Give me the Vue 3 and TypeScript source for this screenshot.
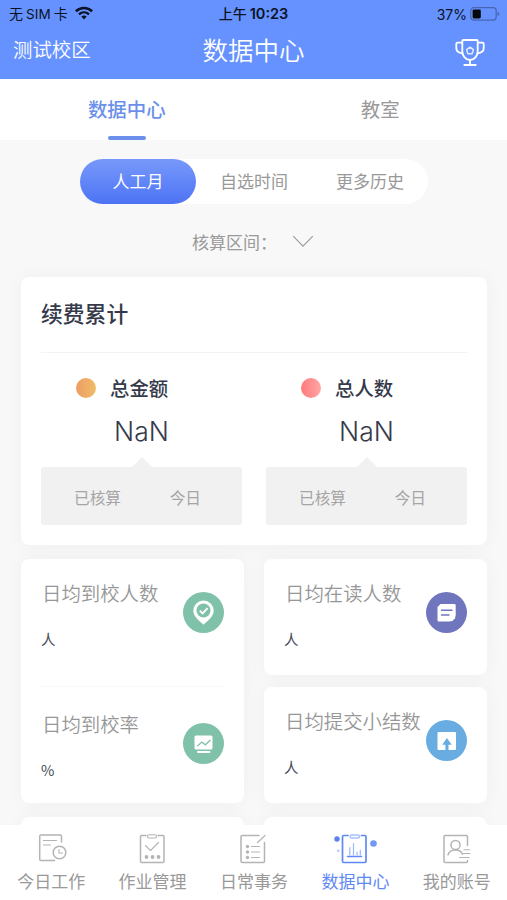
<script setup lang="ts">
import { ref } from 'vue'

interface Metric {
  title: string
  unit: string
  icon: 'pin' | 'chart' | 'note' | 'upload'
  tone: string
}

const ranges: string[] = ['人工月', '自选时间', '更多历史']
const activeRange = ref(0)
const views: string[] = ['数据中心', '教室']
const activeView = ref(0)

const totals = [
  { label: '总金额', value: 'NaN', tone: 'amber' },
  { label: '总人数', value: 'NaN', tone: 'coral' },
]

const columns: Metric[][][] = [
  [
    [
      { title: '日均到校人数', unit: '人', icon: 'pin', tone: 'green' },
      { title: '日均到校率', unit: '%', icon: 'chart', tone: 'green' },
    ],
  ],
  [
    [{ title: '日均在读人数', unit: '人', icon: 'note', tone: 'purple' }],
    [{ title: '日均提交小结数', unit: '人', icon: 'upload', tone: 'blue' }],
  ],
]

const navItems = ['今日工作', '作业管理', '日常事务', '数据中心', '我的账号']
const activeNav = ref(3)
</script>

<template>
  <div class="screen">
    <header class="header">
      <div class="status">
        <div class="status-left">
          <span>无<i class="sim">SIM</i>卡</span>
          <svg class="wifi" width="18" height="14" viewBox="0 0 18 14" fill="none" stroke="#0b1226">
            <path d="M.9 5.2C5.5.9 12.5.9 17.1 5.2" stroke-width="2.6" />
            <path d="M4 8.3c2.9-2.6 7.1-2.6 10 0" stroke-width="2.4" />
            <path d="M6.3 10.4c1.6-1.3 3.8-1.3 5.4 0L9 13.4z" fill="#0b1226" stroke="none" />
          </svg>
        </div>
        <div class="clock">上午<b>10:23</b></div>
        <div class="status-right">
          <span>37%</span>
          <svg width="30" height="14" viewBox="0 0 30 14">
            <rect x=".8" y=".7" width="25.4" height="12.4" rx="3" fill="none" stroke="#4866b0" stroke-width="1.2" />
            <rect x="2.6" y="2.4" width="8.2" height="9" rx="1.4" fill="#05070d" />
            <path d="M27.6 4.7c2.2.7 2.2 3.7 0 4.4z" fill="#4866b0" />
          </svg>
        </div>
      </div>
      <div class="titlebar">
        <span class="campus">测试校区</span>
        <h1>数据中心</h1>
        <svg class="trophy" width="30" height="28" viewBox="0 0 30 28" fill="none" stroke="#fff" stroke-width="1.8" stroke-linejoin="round" stroke-linecap="round">
          <path d="M7.3 2c0-.6.4-1 1-1h13.4c.6 0 1 .4 1 1v10.400c0 4.600-3.400 8.600-7.700 8.600s-7.700-4-7.700-8.600z" />
          <path d="M7.200 3.700H2.500c-.7 0-1.200.5-1.200 1.200v4.300c0 3 2.600 4.700 6.300 5.200M22.800 3.700h4.700c.7 0 1.200.5 1.200 1.200v4.300c0 3-2.600 4.700-6.300 5.200M15 21v4.500M9.300 26h11.400" />
          <path d="m15 8.200 3.400 2.500-1.300 4h-4.200l-1.300-4z" stroke="#dfe8ff" stroke-width="1.500" />
        </svg>
      </div>
    </header>

    <nav class="tabs">
      <button v-for="(view, i) in views" :key="view" class="tab" :class="{ active: activeView === i }" @click="activeView = i">
        {{ view }}
      </button>
    </nav>

    <main class="content">
      <div class="segments">
        <button v-for="(range, i) in ranges" :key="range" class="segment" :class="{ active: activeRange === i }" @click="activeRange = i">
          {{ range }}
        </button>
      </div>

      <div class="period">
        <span>核算区间：</span>
        <svg width="22" height="13" viewBox="0 0 22 13" fill="none" stroke="#999" stroke-width="1.1">
          <path d="m1.200 1.200 9.800 10 9.800-10" />
        </svg>
      </div>

      <section class="card summary">
        <h2>续费累计</h2>
        <div class="totals">
          <div v-for="total in totals" :key="total.label" class="total">
            <div class="total-label"><i class="dot" :class="total.tone"></i><span>{{ total.label }}</span></div>
            <div class="total-value">{{ total.value }}</div>
            <div class="breakdown"><span>已核算</span><span>今日</span></div>
          </div>
        </div>
      </section>

      <div class="metrics">
        <div v-for="(column, c) in columns" :key="c" class="column">
          <section v-for="(group, g) in column" :key="g" class="card metric-card">
            <article v-for="metric in group" :key="metric.title" class="metric">
              <div class="metric-text">
                <h3>{{ metric.title }}</h3>
                <span class="unit">{{ metric.unit }}</span>
              </div>
              <div class="badge" :class="metric.tone">
                <svg v-if="metric.icon === 'pin'" width="41" height="41" viewBox="0 0 41 41">
                  <path d="M20.500 8.500a10.200 10.200 0 0 0-10.200 10.200c0 5.800 6.200 10.300 10.200 14 4-3.700 10.200-8.200 10.200-14A10.200 10.200 0 0 0 20.500 8.500z" fill="#fff" />
                  <circle cx="20.500" cy="18.500" r="7" fill="#80c1a9" />
                  <path d="m16.800 18.600 2.800 2.800 5-5.300" fill="none" stroke="#fff" stroke-width="1.900" />
                </svg>
                <svg v-else-if="metric.icon === 'chart'" width="41" height="41" viewBox="0 0 41 41">
                  <rect x="11.500" y="12.500" width="18" height="14" rx="1.500" fill="#fff" />
                  <path d="m14.500 23 4.300-4 3.600 2.800 5-4.800" fill="none" stroke="#80c1a9" stroke-width="1.300" />
                  <path d="M15 29h11.500" stroke="#fff" stroke-width="2" stroke-linecap="round" />
                </svg>
                <svg v-else-if="metric.icon === 'note'" width="41" height="41" viewBox="0 0 41 41">
                  <path d="M14.500 12h13.700c1 0 1.500.5 1.500 1.500V23l-.7 3.200-2.600 2.800-3.400.6H13c-1 0-1.500-.5-1.500-1.500V15z" fill="#fff" />
                  <path d="M15.500 18.200H26M15.500 23h7.500" stroke="#7076bd" stroke-width="1.500" stroke-linecap="round" />
                </svg>
                <svg v-else width="41" height="41" viewBox="0 0 41 41">
                  <rect x="11.500" y="12" width="18.500" height="18" rx="1" fill="#fff" />
                  <path d="m20.900 18 4.800 6.800h-3.200V30h-3.100v-5.200h-3.200z" fill="#69ace1" />
                </svg>
              </div>
            </article>
          </section>
          <section class="card metric-card upcoming"></section>
        </div>
      </div>
    </main>

    <footer class="navbar">
      <button v-for="(item, i) in navItems" :key="item" class="nav-item" :class="{ active: activeNav === i }" @click="activeNav = i">
        <svg width="46" height="34" viewBox="0 0 46 34" fill="none" stroke="currentColor" stroke-width="1.500" stroke-linecap="round" stroke-linejoin="round">
          <template v-if="i === 0">
            <path d="M33.500 11V5.200c0-.8-.5-1.300-1.300-1.300H13c-.8 0-1.300.5-1.300 1.300v23c0 .8.500 1.300 1.300 1.300H26.500" />
            <path d="M15.500 9.500H28.500M15.500 14h7" stroke-width="1.100" />
            <circle cx="31.500" cy="21.500" r="6.300" />
            <path d="M31 18.500v3.500h3.500" stroke-width="1.100" />
          </template>
          <template v-else-if="i === 1">
            <path d="M17 4.500h-4.300c-.8 0-1.200.4-1.200 1.200v24.600c0 .8.400 1.200 1.200 1.200h21.100c.8 0 1.200-.4 1.200-1.200V5.700c0-.8-.4-1.200-1.200-1.200H29" />
            <rect x="18.500" y="3.800" width="9" height="3.200" rx="1.500" stroke-width="1.100" />
            <path d="m16.500 14.500 5 5 8-8" stroke-width="1.100" />
            <g fill="currentColor" stroke="none"><circle cx="17.500" cy="26" r="1.900" /><circle cx="23.500" cy="26" r="1.900" /><circle cx="29.500" cy="26" r="1.900" /></g>
          </template>
          <template v-else-if="i === 2">
            <path d="M29 4.500H12.200c-.8 0-1.200.4-1.200 1.200v24.600c0 .8.400 1.200 1.200 1.200h21.100c.8 0 1.200-.4 1.200-1.200V11.500" />
            <path d="M35 4.500l-7.500 7M21.500 15.500h8M21.500 21h8M21.500 26.500h8" stroke-width="1.200" />
            <g fill="currentColor" stroke="none"><circle cx="17.500" cy="15.500" r="1.700" /><circle cx="17.500" cy="21" r="1.700" /><circle cx="17.500" cy="26.500" r="1.700" /></g>
          </template>
          <template v-else-if="i === 3">
            <path d="M16 4.500h-4.300c-.8 0-1.200.4-1.200 1.200v24.600c0 .8.400 1.200 1.200 1.200h21.100c.8 0 1.200-.4 1.200-1.200V5.700c0-.8-.4-1.200-1.200-1.200H29.500" stroke-width="1.700" />
            <rect x="18" y="4" width="9.500" height="3" rx="1.500" stroke="#a9c1fc" />
            <path d="M15.500 25.500h14" />
            <path d="M17.800 24v-7.500M21.500 24V12.500M25 24v-3M28.300 24v-5" stroke="#9bb6fa" stroke-width="1.200" />
            <g stroke="none"><circle cx="5" cy="8" r="2.700" fill="#5b83ef" /><circle cx="41.500" cy="12.500" r="3.300" fill="#7399f7" /><circle cx="6.200" cy="19.800" r="1.300" fill="#b5c9fb" /></g>
          </template>
          <template v-else>
            <path d="M34.500 14.500V5.700c0-.8-.4-1.200-1.200-1.200H12.200c-.8 0-1.200.4-1.200 1.200v24.600c0 .8.400 1.200 1.200 1.200h21.100c.8 0 1.200-.4 1.200-1.200v-.8" />
            <path d="M31 18.700h5.500M30.500 22.500H37M26.500 26.500H36" stroke-width="1.100" />
            <circle cx="22.500" cy="14" r="4.600" />
            <path d="M15 23.800c2-6.300 12.500-6.300 14.500-.5" />
          </template>
        </svg>
        <span>{{ item }}</span>
      </button>
    </footer>
  </div>
</template>

<style>
body {
  margin: 0;
  background: #f8f8f8;
}
</style>

<style scoped>
.screen {
  width: 507px;
  height: 900px;
  display: flex;
  flex-direction: column;
  overflow: hidden;
  box-sizing: border-box;
  font-family: Inter, "Noto Sans CJK SC", sans-serif;
  background: #f8f8f8;
  color: #999;
}
button {
  border: 0;
  padding: 0;
  background: none;
  font: inherit;
  color: inherit;
}
h1, h2, h3 { margin: 0; }
i { font-style: normal; }

.header {
  height: 79px;
  flex: none;
  background: #6692ff;
}
.status {
  height: 27px;
  display: grid;
  grid-template-columns: 1fr auto 1fr;
  align-items: center;
  padding: 0 7px 0 9px;
  color: #0b1226;
  font-size: 14px;
  line-height: 27px;
}
.status-left { display: flex; align-items: center; gap: 7px; }
.sim { margin: 0 3px; font-size: 13.5px; letter-spacing: .1px; }
.wifi { margin-top: -2px; }
.clock { font-size: 14px; line-height: 25px; font-weight: 500; margin: -1px 2px 0 0; }
.clock b { font-weight: 600; margin-left: 3px; font-size: 14.5px; }
.status-right { display: flex; align-items: center; justify-content: flex-end; gap: 3px; }

.titlebar {
  height: 48px;
  display: grid;
  grid-template-columns: 1fr auto 1fr;
  align-items: center;
  padding: 0 22px 0 13px;
  color: #fff;
}
.campus { font-size: 19.400px; line-height: 46px; height: 48px; font-weight: 350; }
h1 { font-size: 25.500px; font-weight: 350; line-height: 48px; height: 48px; margin: 0 0 0 9px; }
.trophy { justify-self: end; margin-top: 3px; }

.tabs {
  height: 61px;
  flex: none;
  display: grid;
  grid-template-columns: 1fr 1fr;
  background: #fff;
}
.tab {
  display: flex;
  flex-direction: column;
  align-items: center;
  justify-content: flex-start;
  font-size: 19.400px;
  line-height: 62px;
  height: 61px;
}
.tab.active { color: #6b8fea; font-weight: 500; }
.tab.active::after {
  content: "";
  width: 38px;
  height: 4px;
  margin-top: -5px;
  flex: none;
  border-radius: 2px;
  background: #6b8fea;
}

.content {
  flex: 1;
  min-height: 0;
  overflow: hidden;
  padding: 19px 20px 0 21px;
}
.segments {
  width: 348px;
  height: 45px;
  margin: 0 auto;
  display: grid;
  grid-template-columns: repeat(3, 1fr);
  border-radius: 23px;
  background: #fff;
}
.segment { font-size: 17px; line-height: 46px; height: 45px; border-radius: 23px; }
.segment.active { color: #fff; background: linear-gradient(#7799fb, #4d73f4); }

.period {
  height: 73px;
  display: flex;
  align-items: center;
  justify-content: center;
  gap: 15px;
  font-size: 17px;
  box-sizing: border-box;
  padding: 2px 2px 0 0;
}
.period svg { margin-top: -1px; }

.card {
  background: #fff;
  border-radius: 8px;
  box-shadow: 0 0 20px rgba(0, 0, 0, .04);
  box-sizing: border-box;
}
.summary { height: 268px; padding: 0 20px; color: #353a4b; }
h2 {
  height: 76px;
  box-sizing: border-box;
  font-size: 21.800px;
  font-weight: 500;
  line-height: 74px;
  border-bottom: 1px solid #f3f3f3;
}
.totals { display: grid; grid-template-columns: 201px 201px; justify-content: space-between; }
.total-label {
  height: 56px;
  margin-top: 7px;
  padding-left: 35px;
  display: flex;
  align-items: center;
  gap: 14px;
  font-size: 19.400px;
  line-height: 28px;
  font-weight: 500;
}
.total-label span { padding-top: 2px; }
.dot { width: 20px; height: 20px; border-radius: 50%; }
.amber { background: linear-gradient(90deg, #ee9c63, #efbd6a); }
.coral { background: linear-gradient(90deg, #ff7a7c, #ffa6a5); }
.total-value {
  height: 51px;
  line-height: 30px;
  font-size: 26.500px;
  font-weight: 350;
  text-align: center;
}
.breakdown {
  position: relative;
  height: 58px;
  box-sizing: border-box;
  padding: 6px 41px 0 33px;
  display: flex;
  align-items: center;
  justify-content: space-between;
  font-size: 15.700px;
  line-height: 24px;
  color: #a5a5a5;
  background: #f1f1f1;
  border-radius: 3px;
}
.breakdown::before {
  content: "";
  position: absolute;
  top: -10px;
  left: 50%;
  margin-left: -10px;
  border: solid transparent;
  border-width: 0 10px 10px;
  border-bottom-color: #f1f1f1;
}

.metrics { margin-top: 14px; display: grid; grid-template-columns: 223px 223px; justify-content: space-between; }
.column { display: flex; flex-direction: column; gap: 12px; }
.metric-card { padding: 0 20px; }
.metric { height: 116px; display: flex; justify-content: space-between; position: relative; }
.metric + .metric { margin-top: 11px; border-top: 1px solid #f8f8f8; }
.metric-text { padding-top: 21px; white-space: nowrap; }
.metric + .metric .metric-text { padding-top: 24px; }
h3 { margin-left: 1px; font-size: 19.400px; line-height: 28px; font-weight: 350; color: #979797; }
.unit { display: block; margin-top: 18px; font-family: "Noto Sans CJK SC", sans-serif; font-size: 14.500px; line-height: 26px; font-weight: 400; color: #454a55; }
.badge {
  position: absolute;
  top: 33px;
  right: 0;
  width: 41px;
  height: 41px;
  border-radius: 50%;
}
.metric + .metric .badge { top: 36px; }
.green { background: #80c1a9; }
.purple { background: #7076bd; }
.blue { background: #69ace1; }
.upcoming { height: 100px; margin-top: 2px; }

.navbar {
  height: 75px;
  flex: none;
  display: grid;
  grid-template-columns: repeat(5, 1fr);
  background: #fff;
  z-index: 1;
}
.nav-item { display: flex; flex-direction: column; align-items: center; font-size: 17px; color: #999; }
.nav-item svg { margin-top: 6px; flex: none; color: #b4b4b4; }
.nav-item span { line-height: 26px; margin-top: 4px; padding-left: 1px; }
.nav-item.active, .nav-item.active svg { color: #6089f5; }
</style>
